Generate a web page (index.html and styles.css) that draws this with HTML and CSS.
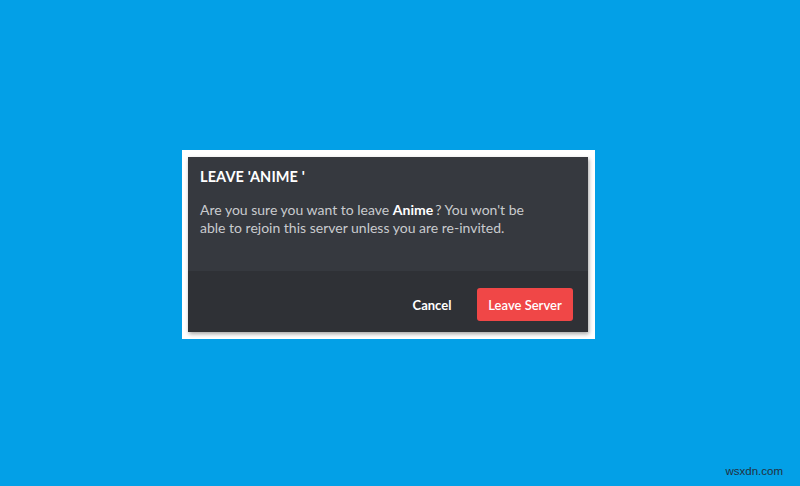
FILE: index.html
```html
<!DOCTYPE html>
<html>
<head>
<meta charset="utf-8">
<link rel="stylesheet" href="styles.css">
</head>
<body>
<div class="stage">
  <div class="frame">
    <div class="modal">
      <div class="content">
        <h2 class="title">LEAVE 'ANIME '</h2>
        <p class="text">Are you sure you want to leave <strong>Anime</strong><span class="q">?</span> You won't be able to rejoin this server unless you are re-invited.</p>
      </div>
      <div class="footer">
        <button class="cancel">Cancel</button>
        <button class="leave">Leave Server</button>
      </div>
    </div>
  </div>
  <div class="watermark">wsxdn.com</div>
</div>
</body>
</html>
```
FILE: styles.css
```css
html, body {
  margin: 0;
  padding: 0;
}
body {
  width: 800px;
  height: 486px;
  background: #03a0e7;
  overflow: hidden;
  font-family: Lato, "Open Sans", sans-serif;
}
.stage {
  position: relative;
  width: 800px;
  height: 486px;
  display: flex;
  justify-content: flex-start;
  align-items: flex-start;
}
.frame {
  margin: 150px 0 0 182px;
  width: 413px;
  height: 189px;
  box-sizing: border-box;
  background: #ffffff;
  padding: 7px 7px 7px 6px;
}
.modal {
  width: 400px;
  height: 175px;
  background: #36393f;
  display: flex;
  flex-direction: column;
  box-shadow: 1px 2px 4px rgba(0,0,0,0.35);
}
.content {
  flex: 1;
  padding: 11px 12px 0 12px;
}
.title {
  margin: 0;
  color: #ffffff;
  font-size: 14.5px;
  font-weight: 700;
  line-height: 18px;
  letter-spacing: 0.1px;
}
.text {
  margin: 15px 0 0 0;
  color: #c9cbce;
  font-size: 14px;
  line-height: 18px;
  width: 350px;
}
.text strong {
  color: #ffffff;
  font-weight: 700;
}
.text .q {
  margin-left: 2px;
}
.footer {
  height: 61px;
  box-sizing: border-box;
  background: #2f3136;
  display: flex;
  justify-content: flex-end;
  align-items: flex-end;
  padding: 0 15px 11px 0;
}
.cancel {
  background: none;
  border: none;
  color: #ffffff;
  font-family: inherit;
  font-size: 13px;
  font-weight: 700;
  padding: 0;
  width: 90px;
  height: 33px;
}
.leave {
  background: #f04747;
  border: none;
  border-radius: 3px;
  color: #ffffff;
  font-family: inherit;
  font-size: 13px;
  font-weight: 600;
  width: 96px;
  height: 33px;
  padding: 0;
}
.watermark {
  position: absolute;
  right: 17px;
  top: 465px;
  font-family: "Liberation Sans", Arial, sans-serif;
  font-size: 11.5px;
  color: #22303f;
}
```
